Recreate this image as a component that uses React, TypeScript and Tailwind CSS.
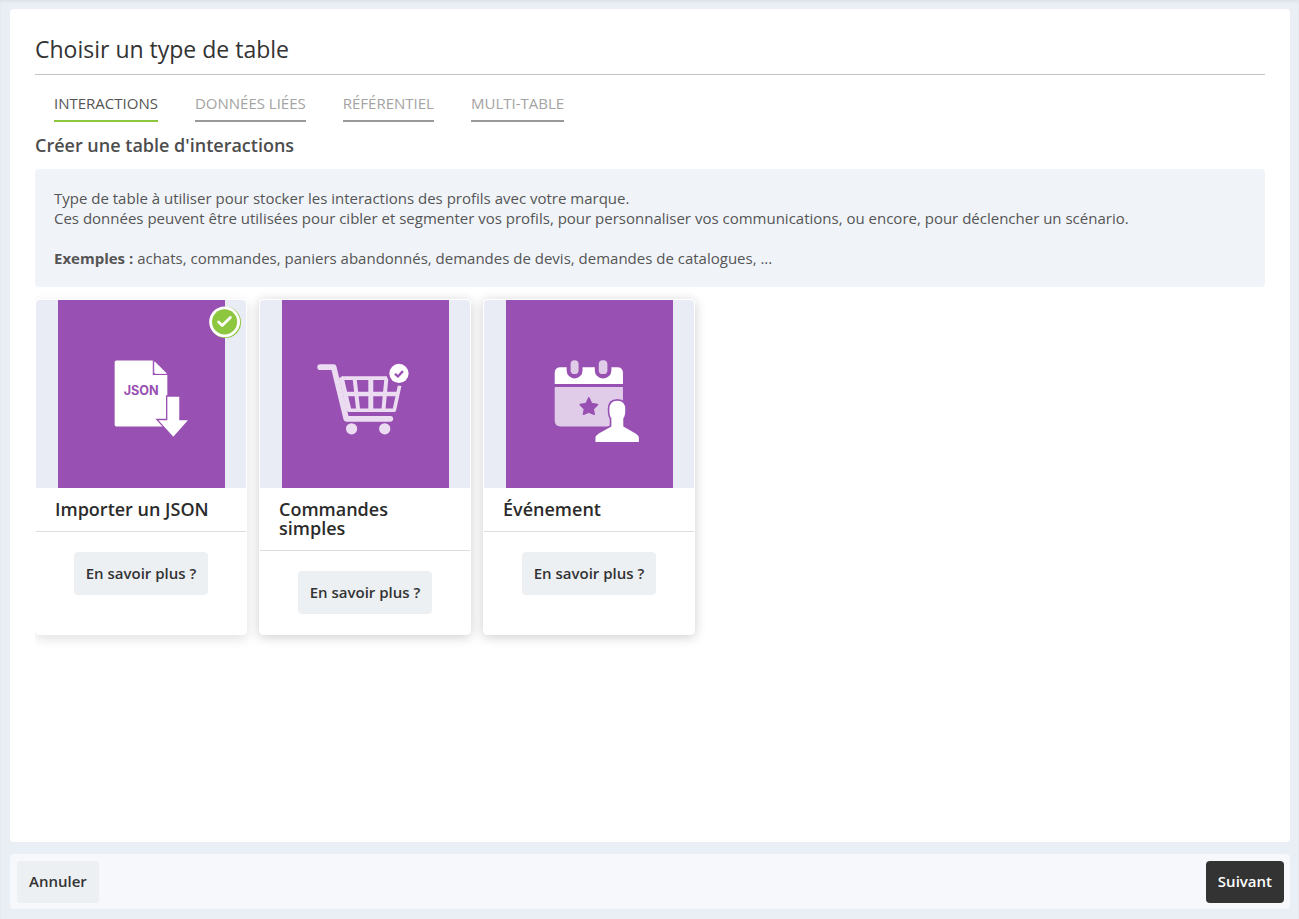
import React, { useState } from 'react';

const TABS = ['Interactions', 'Données liées', 'Référentiel', 'Multi-table'];

const JsonIcon = () => (
  <svg viewBox="0 0 504 564" className="h-full w-full" aria-hidden="true">
    <path d="M176 181H286V225H330V375Q330 380 325 380H176Q171 380 171 375V186Q171 181 176 181Z" fill="#fff" />
    <path d="M289 181L330 222H295Q289 222 289 216Z" fill="#fff" stroke="#9850b2" strokeWidth="3" />
    <path d="M292 184L329 221H297Q292 221 292 216Z" fill="#fff" />
    <path d="M330 290H366V361H392L348 411L303 361H330Z" fill="#fff" stroke="#9850b2" strokeWidth="8" />
    <path d="M330 290H366V361H392L348 411L303 361H330Z" fill="#fff" />
    <text x="251" y="284" textAnchor="middle" className="font-['Inter'] text-[38px] font-bold" fill="#9850b2">
      JSON
    </text>
  </svg>
);

const CartIcon = () => (
  <svg viewBox="0 0 504 564" className="h-full w-full" aria-hidden="true">
    <g fill="none" stroke="#ecdcf1" strokeLinejoin="round">
      <path d="M115 201H156L194 357H327" strokeWidth="17" strokeLinecap="round" />
      <path d="M181 234H317M355 257L339 331H204L181 234" strokeWidth="11" />
      <path d="M219 234L230 331M315 234L306 331" strokeWidth="12" />
      <path d="M268 234V331" strokeWidth="15" />
      <path d="M187 282H350" strokeWidth="14" />
    </g>
    <path d="M172 234L184 228L208 336L196 334Z" fill="#ecdcf1" />
    <circle cx="210" cy="387" r="17" fill="#ecdcf1" />
    <circle cx="310" cy="387" r="17" fill="#ecdcf1" />
    <circle cx="353" cy="220" r="36" fill="#9850b2" />
    <circle cx="353" cy="220" r="29" fill="#fff" />
    <path d="M341 221L350 229L365 213" fill="none" stroke="#9850b2" strokeWidth="7" />
  </svg>
);

const EventIcon = () => (
  <svg viewBox="0 0 504 564" className="h-full w-full" aria-hidden="true">
    <path d="M147 252V219Q147 201 165 201H335Q353 201 353 219V252Z" fill="#fff" />
    <path d="M147 261H353V380H165Q147 380 147 362Z" fill="#e0cce8" />
    <rect x="183" y="170" width="48" height="65" rx="24" fill="#9850b2" />
    <rect x="195" y="180" width="24" height="42" rx="12" fill="#e0cce8" />
    <rect x="268" y="170" width="50" height="65" rx="24" fill="#9850b2" />
    <rect x="280" y="180" width="26" height="42" rx="12" fill="#e0cce8" />
    <path
      d="M250 294L258 311L276 314L263 327L266 343L250 336L234 343L237 327L224 314L242 311Z"
      fill="#9850b2"
      stroke="#9850b2"
      strokeWidth="5"
      strokeLinejoin="round"
    />
    <path
      d="M312 328Q312 302 336 302Q360 302 360 328Q360 350 354 355V380L391 401Q401 407 401 415V427H270V415Q270 407 280 401L318 380V355Q312 350 312 328Z"
      fill="#9850b2"
      stroke="#9850b2"
      strokeWidth="10"
    />
    <path
      d="M312 328Q312 302 336 302Q360 302 360 328Q360 350 354 355V380L391 401Q401 407 401 415V427H270V415Q270 407 280 401L318 380V355Q312 350 312 328Z"
      fill="#fff"
    />
  </svg>
);

const SelectedBadge = () => (
  <svg viewBox="0 0 32 32" className="absolute top-[6px] right-[5px] h-8 w-8" aria-hidden="true">
    <circle cx="16.4" cy="16.4" r="15.6" fill="#8dc63f" />
    <circle cx="15.6" cy="15.8" r="15.4" fill="#fff" />
    <circle cx="15.6" cy="15.8" r="12.6" fill="#8dc63f" />
    <path d="M9.6 16L13.2 19.6L21.4 11.4" fill="none" stroke="#fff" strokeWidth="2.8" strokeLinecap="round" strokeLinejoin="round" />
  </svg>
);

const CARDS = [
  { id: 'json', title: 'Importer un JSON', Icon: JsonIcon },
  { id: 'orders', title: 'Commandes simples', Icon: CartIcon },
  { id: 'event', title: 'Événement', Icon: EventIcon },
];

export default function App() {
  const [activeTab, setActiveTab] = useState(TABS[0]);
  const [selected, setSelected] = useState('json');

  return (
    <div className="flex min-h-screen flex-col gap-3 bg-[#eaeff6] pt-[9px] pr-[9px] pb-[10px] pl-[10px] font-['Open_Sans',sans-serif] text-[15px] leading-5 text-[#555] shadow-[inset_0_2px_3px_rgba(0,0,0,0.05)]">
      <main className="flex-1 rounded bg-white px-[25px] pt-6 pb-6">
        <h1 className="border-b border-[#c4c4c4] pb-[9px] text-[23px] leading-8 text-[#333]">
          Choisir un type de table
        </h1>

        <nav className="flex gap-[37px] px-[19px] pt-[18px]">
          {TABS.map((tab) => (
            <button
              key={tab}
              type="button"
              onClick={() => setActiveTab(tab)}
              className={
                tab === activeTab
                  ? 'border-b-2 border-[#8dc63f] pb-[7px] uppercase text-[#555]'
                  : 'border-b-2 border-[#999] pb-[7px] uppercase text-[#a3a3a3]'
              }
            >
              {tab}
            </button>
          ))}
        </nav>

        <h2 className="mt-[11px] text-[18px] leading-6 font-semibold text-[#4d4d4d]">
          Créer une table d'interactions
        </h2>

        <div className="mt-3 rounded bg-[#f0f4f9] px-[19px] py-[19px]">
          <p>Type de table à utiliser pour stocker les interactions des profils avec votre marque.</p>
          <p>
            Ces données peuvent être utilisées pour cibler et segmenter vos profils, pour personnaliser vos
            communications, ou encore, pour déclencher un scénario.
          </p>
          <p className="mt-5">
            <strong>Exemples :</strong> achats, commandes, paniers abandonnés, demandes de devis, demandes de
            catalogues, ...
          </p>
        </div>

        <div className="flex flex-wrap gap-3 overflow-hidden pt-3 pb-5">
          {CARDS.map(({ id, title, Icon }) => (
            <article
              key={id}
              className={
                selected === id
                  ? 'relative flex w-[212px] flex-col rounded border border-white bg-white pb-5 shadow-[0_4px_12px_rgba(0,0,0,0.12)]'
                  : 'relative flex w-[212px] flex-col rounded border border-white bg-white pb-5 shadow-[0_2px_12px_rgba(0,0,0,0.2)]'
              }
            >
              <label className="block cursor-pointer">
                <input
                  type="radio"
                  name="table-type"
                  className="sr-only"
                  checked={selected === id}
                  onChange={() => setSelected(id)}
                />
                <span className="flex h-[188px] justify-center rounded-t bg-[#e9ecf5]">
                  <span className="block w-[167px] bg-[#9850b2]">
                    <Icon />
                  </span>
                </span>
                <span className="block border-b border-[#ddd] px-[19px] py-3 text-[18px] leading-[19px] font-semibold text-[#2b2b2b]">
                  {title}
                </span>
              </label>
              {selected === id && <SelectedBadge />}
              <button
                type="button"
                className="mx-auto mt-5 h-[43px] rounded bg-[#edf0f3] px-3 pb-[2px] font-semibold text-[#333]"
              >
                En savoir plus ?
              </button>
            </article>
          ))}
        </div>
      </main>

      <footer className="flex items-center justify-between rounded bg-[#f6f8fc] pt-[7px] pr-[6px] pb-[6px] pl-[7px]">
        <button type="button" className="h-[42px] rounded bg-[#edf0f3] px-3 pb-[2px] font-semibold text-[#333]">
          Annuler
        </button>
        <button type="button" className="h-[42px] rounded bg-[#333] px-3 pb-[2px] font-semibold text-white">
          Suivant
        </button>
      </footer>
    </div>
  );
}
